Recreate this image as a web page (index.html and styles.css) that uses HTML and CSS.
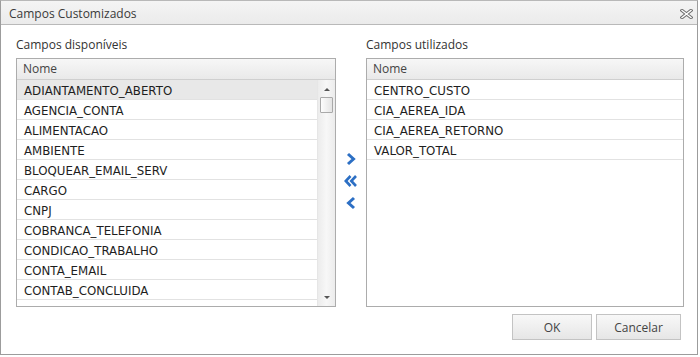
FILE: index.html
```html
<!DOCTYPE html>
<html lang="pt-BR">
<head>
  <meta charset="UTF-8" />
  <title>Campos Customizados</title>
  <link rel="stylesheet" href="styles.css">
</head>
<body>
  <div class="dialog">
    <div class="titlebar">
      <span class="title">Campos Customizados</span>
      <svg class="close" width="13" height="10" viewBox="0 0 13 10">
        <path d="M2 1.5 L11 8.5 M11 1.5 L2 8.5" stroke="#6e6e6e" stroke-width="3.4" stroke-linecap="square" fill="none"/>
        <path d="M2 1.5 L11 8.5 M11 1.5 L2 8.5" stroke="#fff" stroke-width="1.4" stroke-linecap="square" fill="none"/>
      </svg>
    </div>

    <div class="content">
      <div class="panel left">
        <div class="label">Campos disponíveis</div>
        <div class="list">
          <div class="list-head">Nome</div>
          <div class="list-body">
            <div class="rows">
              <div class="row selected">ADIANTAMENTO_ABERTO</div>
              <div class="row">AGENCIA_CONTA</div>
              <div class="row">ALIMENTACAO</div>
              <div class="row">AMBIENTE</div>
              <div class="row">BLOQUEAR_EMAIL_SERV</div>
              <div class="row">CARGO</div>
              <div class="row">CNPJ</div>
              <div class="row">COBRANCA_TELEFONIA</div>
              <div class="row">CONDICAO_TRABALHO</div>
              <div class="row">CONTA_EMAIL</div>
              <div class="row">CONTAB_CONCLUIDA</div>
            </div>
            <div class="scrollbar">
              <div class="arrow up"></div>
              <div class="thumb"></div>
              <div class="track"></div>
              <div class="arrow down"></div>
            </div>
          </div>
        </div>
      </div>

      <div class="mover">
        <svg width="14" height="14" viewBox="0 0 14 14">
          <path d="M4 2 L9.5 7 L4 12" stroke="#2c6fc4" stroke-width="3" fill="none"/>
        </svg>
        <svg width="14" height="14" viewBox="0 0 14 14">
          <path d="M6.5 2 L1.8 7 L6.5 12 M12 2 L7.3 7 L12 12" stroke="#2c6fc4" stroke-width="2.6" fill="none"/>
        </svg>
        <svg width="14" height="14" viewBox="0 0 14 14">
          <path d="M10 2 L4.5 7 L10 12" stroke="#2c6fc4" stroke-width="3" fill="none"/>
        </svg>
      </div>

      <div class="panel right">
        <div class="label">Campos utilizados</div>
        <div class="list">
          <div class="list-head">Nome</div>
          <div class="list-body">
            <div class="rows">
              <div class="row">CENTRO_CUSTO</div>
              <div class="row">CIA_AEREA_IDA</div>
              <div class="row">CIA_AEREA_RETORNO</div>
              <div class="row">VALOR_TOTAL</div>
            </div>
          </div>
        </div>
      </div>
    </div>

    <div class="footer">
      <button class="btn ok">OK</button>
      <button class="btn cancel">Cancelar</button>
    </div>
  </div>
</body>
</html>
```

FILE: styles.css
```css
html, body {
  margin: 0;
  padding: 0;
  background: #fff;
}

body {
  font-family: "Open Sans", "Noto Sans", sans-serif;
  font-size: 12px;
  color: #333;
}

.dialog {
  width: 698px;
  height: 355px;
  box-sizing: border-box;
  border: 1px solid #9c9c9c;
  border-top-color: #b8b8b8;
}

.titlebar {
  height: 23px;
  display: flex;
  align-items: center;
  justify-content: space-between;
  padding: 0 4px 0 8px;
  background: linear-gradient(#f4f4f4, #ebebeb);
  border-bottom: 1px solid #b9b9b9;
}

.title {
  color: #3a3a3a;
  font-size: 12px;
  margin-top: 1px;
}

.close {
  margin-top: 2px;
}

.content {
  display: flex;
  padding: 12px 0 0 15px;
}

.panel {
  display: flex;
  flex-direction: column;
}

.panel.left {
  width: 320px;
}

.panel.right {
  width: 318px;
}

.label {
  height: 16px;
  line-height: 16px;
  margin-bottom: 5px;
}

.list {
  height: 249px;
  box-sizing: border-box;
  border: 1px solid #acacac;
  display: flex;
  flex-direction: column;
}

.list-head {
  height: 20px;
  line-height: 20px;
  padding-left: 6px;
  background: linear-gradient(#f7f7f7, #e9e9e9);
  border-bottom: 1px solid #cfcfcf;
  color: #444;
}

.list-body {
  flex: 1;
  display: flex;
  overflow: hidden;
}

.rows {
  flex: 1;
  overflow: hidden;
}

.row {
  height: 16px;
  line-height: 16px;
  padding: 3px 0 0 7px;
  border-bottom: 1px solid #e2e2e2;
  font-family: "DejaVu Sans", Verdana, sans-serif;
  font-size: 11.8px;
  color: #1e1e1e;
}

.row.selected {
  background: #e8e8e8;
}

.scrollbar {
  width: 17px;
  display: flex;
  flex-direction: column;
  align-items: center;
  background: linear-gradient(90deg, #ececec, #f7f7f7 50%, #ececec);
  border-left: 1px solid #e6e6e6;
}

.arrow {
  width: 0;
  height: 0;
  border-left: 3px solid transparent;
  border-right: 3px solid transparent;
}

.arrow.up {
  margin-top: 8px;
  border-bottom: 3px solid #555;
}

.arrow.down {
  margin-bottom: 7px;
  border-top: 3px solid #555;
}

.thumb {
  width: 13px;
  height: 16px;
  margin-top: 6px;
  box-sizing: border-box;
  border: 1px solid #a9a9a9;
  border-radius: 1px;
  background: linear-gradient(90deg, #fdfdfd, #e4e4e4);
}

.track {
  flex: 1;
}

.mover {
  width: 30px;
  display: flex;
  flex-direction: column;
  align-items: center;
  justify-content: center;
  gap: 8px;
  padding-top: 17px;
}

.footer {
  display: flex;
  justify-content: flex-end;
  gap: 4px;
  padding: 7px 16px 0 0;
}

.btn {
  height: 26px;
  box-sizing: border-box;
  border: 1px solid #c3c3c3;
  background: linear-gradient(#f8f8f8, #e6e6e6);
  font-family: "Open Sans", "Noto Sans", sans-serif;
  font-size: 12px;
  color: #444;
  padding: 0;
}

.btn.ok {
  width: 80px;
}

.btn.cancel {
  width: 85px;
}
```
